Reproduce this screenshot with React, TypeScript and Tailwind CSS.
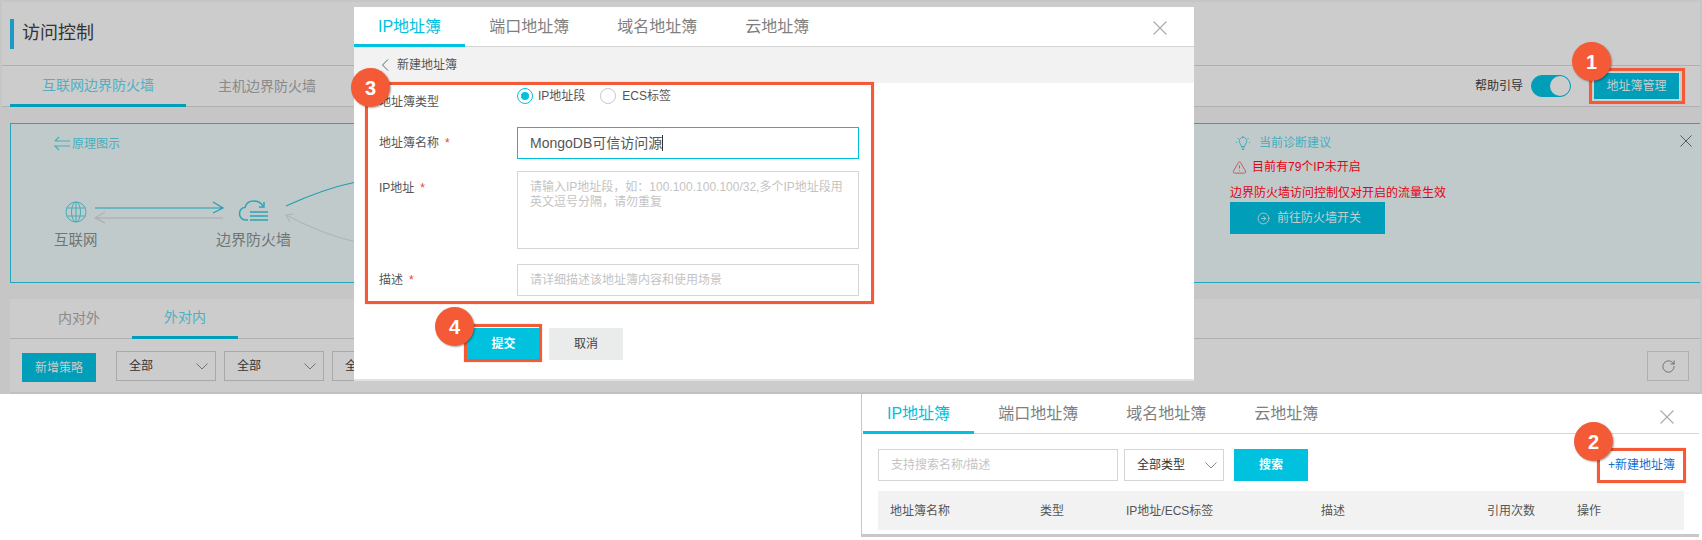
import { CircleArrowRight, RotateCw, TriangleAlert } from "lucide-react";

const Badge = ({ n, className }: { n: number; className: string }) => (
  <div
    className={`absolute z-30 flex h-[39px] w-[39px] items-center justify-center rounded-full bg-[#f55a36] text-[20px] font-bold text-white shadow-[1px_1px_2px_rgba(0,0,0,0.35)] ${className}`}
  >
    {n}
  </div>
);

const RedBox = ({ className }: { className: string }) => (
  <div
    className={`pointer-events-none absolute z-20 border-[3px] border-[#f55a36] shadow-[0_0_1px_#f9a08c] ${className}`}
  />
);

const Chevron = ({ color = "#8a8a8a" }: { color?: string }) => (
  <svg width="12" height="7" viewBox="0 0 12 7" fill="none">
    <path d="M0.5 0.5 L6 6 L11.5 0.5" stroke={color} strokeWidth="1" />
  </svg>
);

const CloseIcon = ({ size, color }: { size: number; color: string }) => (
  <svg width={size} height={size} viewBox="0 0 14 14" fill="none">
    <path d="M0.5 0.5 L13.5 13.5 M13.5 0.5 L0.5 13.5" stroke={color} strokeWidth="1.1" />
  </svg>
);

// tab strip shared by the two address book dialogs
const BookTabs = () => (
  <div className="flex h-[40px] border-b border-[#d5d5d5] text-[16px] text-[#7f7f7f]">
    <div className="-mb-[1px] flex h-[40px] items-center border-b-[3px] border-[#00c1de] px-[24px] pt-[3px] text-[#00c1de]">
      IP地址簿
    </div>
    <div className="flex items-center px-[24px]">端口地址簿</div>
    <div className="flex items-center px-[24px]">域名地址簿</div>
    <div className="flex items-center px-[24px]">云地址簿</div>
  </div>
);

const Star = () => <span className="ml-[6px] text-[#f04134]">*</span>;

const Diagram = () => (
  <svg className="absolute left-0 top-0" width="350" height="158" viewBox="11 124 350 158" fill="none">
    {/* flip arrows next to the title */}
    <path d="M55 141 L59 137 M55 141 H70 M70 146 H55 L59 150" stroke="#46aebf" strokeWidth="1.2" />
    {/* globe */}
    <g stroke="#45aebc" strokeWidth="1">
      <circle cx="76" cy="212" r="10" />
      <ellipse cx="76" cy="212" rx="4.5" ry="10" />
      <path d="M76 202 V222 M66.5 208 H85.5 M66.5 216 H85.5" />
    </g>
    {/* internet <-> firewall */}
    <path d="M95 208 H223 M213 202 L223 208 L213 213" stroke="#1f9fb3" strokeWidth="1.2" />
    <path d="M223 218 H95 M105 212 L95 218 L105 223" stroke="#b0b4b4" strokeWidth="1.4" />
    {/* cloud */}
    <g stroke="#2ba5b6" strokeWidth="1.5">
      <path d="M248 220 H246 C241 220 239.500 216 239.500 213.500 C239.500 210 242 207.500 245 207.500 C246 203 250 201 254 201 C258 201 261 203 263 206" />
      <path d="M264 202 V207 H259" />
      <path d="M250 212 H268 M250 216 H268 M250 220 H268" />
    </g>
    {/* lines running on under the dialog */}
    <path d="M286 206 C310 195 332 187 356 182" stroke="#1f9fb3" strokeWidth="1.2" />
    <path d="M286 215 C305 225 330 236 356 242 M294 214 L286 215 L290 222" stroke="#b0b4b4" strokeWidth="1.1" />
  </svg>
);

const AddressForm = () => (
  <div className="pl-[25px] text-[12px] text-[#555]">
    <div className="flex h-[44px] pt-[5px]">
      <div className="w-[138px] pt-[5px]">地址簿类型</div>
      <div className="flex h-[16px] items-center">
        <span className="flex h-[16px] w-[16px] items-center justify-center rounded-full border border-[#00c1de]">
          <span className="h-[8px] w-[8px] rounded-full bg-[#00c1de]" />
        </span>
        <span className="ml-[5px] mr-[15px]">IP地址段</span>
        <span className="h-[16px] w-[16px] rounded-full border border-[#c8c8c8]" />
        <span className="ml-[6px]">ECS标签</span>
      </div>
    </div>
    <div className="flex h-[32px] items-center">
      <div className="w-[138px]">
        地址簿名称
        <Star />
      </div>
      <div className="flex h-[32px] w-[342px] items-center border border-[#00c1de] pl-[12px] text-[14px] text-[#555]">
        MongoDB可信访问源
        <span className="h-[16px] w-[1px] bg-[#333]" />
      </div>
    </div>
    <div className="mt-[12px] flex">
      <div className="w-[138px] pt-[8px]">
        IP地址
        <Star />
      </div>
      <div className="h-[78px] w-[342px] border border-[#d5d5d5] px-[12px] pt-[8px] leading-[15px] text-[#c4c4c4]">
        请输入IP地址段，如：100.100.100.100/32,多个IP地址段用英文逗号分隔，请勿重复
      </div>
    </div>
    <div className="mt-[15px] flex h-[32px] items-center">
      <div className="w-[138px]">
        描述
        <Star />
      </div>
      <div className="flex h-[32px] w-[342px] items-center border border-[#d5d5d5] pl-[12px] text-[#c4c4c4]">
        请详细描述该地址簿内容和使用场景
      </div>
    </div>
    <div className="ml-[88px] mt-[32px] flex gap-[9px]">
      <div className="flex h-[32px] w-[73px] items-center justify-center bg-[#00c1de] font-bold text-white">提交</div>
      <div className="flex h-[32px] w-[74px] items-center justify-center bg-[#eaebeb] text-[#444]">取消</div>
    </div>
  </div>
);

const AddressDialog = () => (
  <div className="absolute left-[354px] top-[7px] z-10 h-[374px] w-[840px] border-b-2 border-[#e2e2e2] bg-white">
    <BookTabs />
    <div className="absolute right-[27px] top-[14px]">
      <CloseIcon size={14} color="#aaaaaa" />
    </div>
    <div className="flex h-[36px] items-center bg-[#f2f2f2] pl-[28px] text-[12px] text-[#555]">
      <svg width="7" height="12" viewBox="0 0 7 12" fill="none">
        <path d="M6 0.5 L0.5 6 L6 11.5" stroke="#666" strokeWidth="1" />
      </svg>
      <span className="ml-[8px]">新建地址簿</span>
    </div>
    <AddressForm />
  </div>
);

const Banner = () => (
  <div className="relative ml-[8px] mt-[16px] h-[160px] border-y border-l border-[#22a7bd] bg-[#c1caca] pl-[1219px] pt-[12px] text-[12px]">
    <Diagram />
    <span className="absolute left-[61px] top-[11px] text-[#46aebf]">原理图示</span>
    <span className="absolute left-[43px] top-[106px] text-[14.500px] text-[#6f7575]">互联网</span>
    <span className="absolute left-[205px] top-[105px] text-[15px] text-[#6f7575]">边界防火墙</span>
    <div className="flex h-[14px] items-center text-[#46aebf]">
      <svg className="ml-[6px]" width="14" height="15" viewBox="0 0 14 15" fill="none" stroke="#46a8b8" strokeWidth="1">
        <path d="M4.500 8 A3.800 3.800 0 1 1 9.500 8 C9 9 8.800 9.500 8.800 10.500 H5.200 C5.200 9.500 5 9 4.500 8 Z M5.500 12 H8.500 M6 13.500 H8" />
        <path d="M7 0 V1.500 M1.500 2 L2.500 3 M12.500 2 L11.500 3 M0 6.500 H1 M13 6.500 H14" />
      </svg>
      <span className="ml-[9px]">当前诊断建议</span>
    </div>
    <div className="mt-[9px] flex h-[16px] items-center text-[#e60012]">
      <TriangleAlert className="ml-[2px] h-[15px] w-[15px] text-[#c8404c]" strokeWidth={1.3} />
      <span className="ml-[5px]">目前有79个IP未开启</span>
    </div>
    <div className="mt-[9px] text-[#e60012]">边界防火墙访问控制仅对开启的流量生效</div>
    <div className="flex h-[32px] w-[155px] items-center bg-[#009eb8] pl-[27px] text-[#c8cccc]">
      <CircleArrowRight className="mr-[7px] h-[13px] w-[13px]" strokeWidth={1.5} />
      前往防火墙开关
    </div>
    <div className="absolute right-[8px] top-[11px]">
      <CloseIcon size={12} color="#555555" />
    </div>
  </div>
);

const FilterSelect = () => (
  <div className="flex h-[30px] w-[100px] shrink-0 items-center justify-between border border-[#a9a9a9] pl-[12px] pr-[7px] text-[12px] text-[#333]">
    全部
    <Chevron color="#70757a" />
  </div>
);

const BackgroundPage = () => (
  <div className="flex h-[394px] flex-col bg-[#c6c6c6] pl-[2px] pr-[2px] pt-[2px]">
    <div className="flex h-[64px] items-center border-b border-[#b0b0b0] bg-[#cccccc] pl-[8px]">
      <div className="h-[30px] w-[4px] bg-[#1a9ac4]" />
      <div className="ml-[8px] text-[18px] text-[#333]">访问控制</div>
    </div>
    <div className="flex h-[41px] shrink-0 items-center border-b border-[#b0b0b0] bg-[#cccccc] pl-[8px] pr-[20px] text-[14px]">
      <div className="-mb-[1px] flex h-[41px] w-[176px] items-center justify-center border-b-[3px] border-[#009eb8] text-[#4eb0c2]">
        互联网边界防火墙
      </div>
      <div className="ml-[32px] text-[#8a8a8a]">主机边界防火墙</div>
      <div className="ml-auto text-[12px] text-[#333]">帮助引导</div>
      <div className="ml-[8px] flex h-[22px] w-[40px] items-center justify-end rounded-full border border-[#009eb8] bg-[#009eb8]">
        <span className="h-[20px] w-[20px] rounded-full bg-[#cccccc]" />
      </div>
      <div className="ml-[22px] flex h-[28px] w-[87px] items-center justify-center border border-[#c8d8da] bg-[#009eb8] text-[12px] text-[#c8cccc]">
        地址簿管理
      </div>
    </div>
    <Banner />
    <div className="ml-[8px] mt-[16px] flex h-[40px] shrink-0 border-b border-[#b0b0b0] bg-[#cccccc] pl-[16px] text-[14px] text-[#8a8a8a]">
      <div className="flex w-[106px] items-center justify-center">内对外</div>
      <div className="-mb-[1px] flex h-[40px] w-[106px] items-center justify-center border-b-[3px] border-[#009eb8] text-[#4eb0c2]">
        外对内
      </div>
    </div>
    <div className="ml-[8px] flex flex-1 items-start gap-[8px] border-b-2 border-[#c0c0c0] bg-[#cccccc] pl-[12px] pr-[11px] pt-[12px]">
      <div className="mr-[12px] mt-[2px] flex h-[29px] w-[74px] shrink-0 items-center justify-center bg-[#009eb8] text-[12px] text-[#c8cccc]">
        新增策略
      </div>
      <FilterSelect />
      <FilterSelect />
      <FilterSelect />
      <div className="ml-auto flex h-[30px] w-[42px] items-center justify-center border border-[#b0b0b0]">
        <RotateCw className="h-[15px] w-[15px] text-[#555]" strokeWidth={1.2} />
      </div>
    </div>
  </div>
);

const BookList = () => (
  <div className="relative h-[143px] w-[838px] border-b-[3px] border-l border-[#c8c8c8] bg-white pl-[1px]">
    <BookTabs />
    <div className="absolute right-[25px] top-[16px]">
      <CloseIcon size={14} color="#aaaaaa" />
    </div>
    <div className="flex items-center px-[15px] pt-[15px] text-[12px]">
      <div className="flex h-[32px] w-[240px] items-center border border-[#d5d5d5] pl-[12px] text-[#c4c4c4]">
        支持搜索名称/描述
      </div>
      <div className="ml-[6px] flex h-[32px] w-[100px] items-center justify-between border border-[#d5d5d5] pl-[12px] pr-[6px] text-[#333]">
        全部类型
        <Chevron />
      </div>
      <div className="ml-[10px] flex h-[32px] w-[74px] items-center justify-center bg-[#00c1de] font-bold text-white">
        搜索
      </div>
      <div className="ml-auto mr-[9px] text-[#0b6fd6]">+新建地址簿</div>
    </div>
    <div className="mx-[15px] mt-[10px] flex h-[39px] items-center bg-[#f2f2f2] pl-[12px] text-[12px] text-[#555]">
      <div className="w-[150px]">地址簿名称</div>
      <div className="w-[86px]">类型</div>
      <div className="w-[195px]">IP地址/ECS标签</div>
      <div className="w-[166px]">描述</div>
      <div className="w-[90px]">引用次数</div>
      <div>操作</div>
    </div>
  </div>
);

export default function App() {
  return (
    <div className="relative h-[540px] w-[1702px] overflow-hidden bg-white font-['Liberation_Sans','Noto_Sans_CJK_SC',sans-serif]">
      <BackgroundPage />
      <div className="flex pl-[861px]">
        <BookList />
      </div>
      <AddressDialog />

      <RedBox className="left-[1589px] top-[68px] h-[36px] w-[96px]" />
      <RedBox className="left-[365px] top-[82px] h-[222px] w-[509px]" />
      <RedBox className="left-[464px] top-[324px] h-[38px] w-[78px]" />
      <RedBox className="left-[1597px] top-[448px] h-[35px] w-[89px]" />

      <Badge n={1} className="left-[1572px] top-[42px]" />
      <Badge n={2} className="left-[1574px] top-[422px]" />
      <Badge n={3} className="left-[351px] top-[68px]" />
      <Badge n={4} className="left-[435px] top-[307px]" />
    </div>
  );
}
